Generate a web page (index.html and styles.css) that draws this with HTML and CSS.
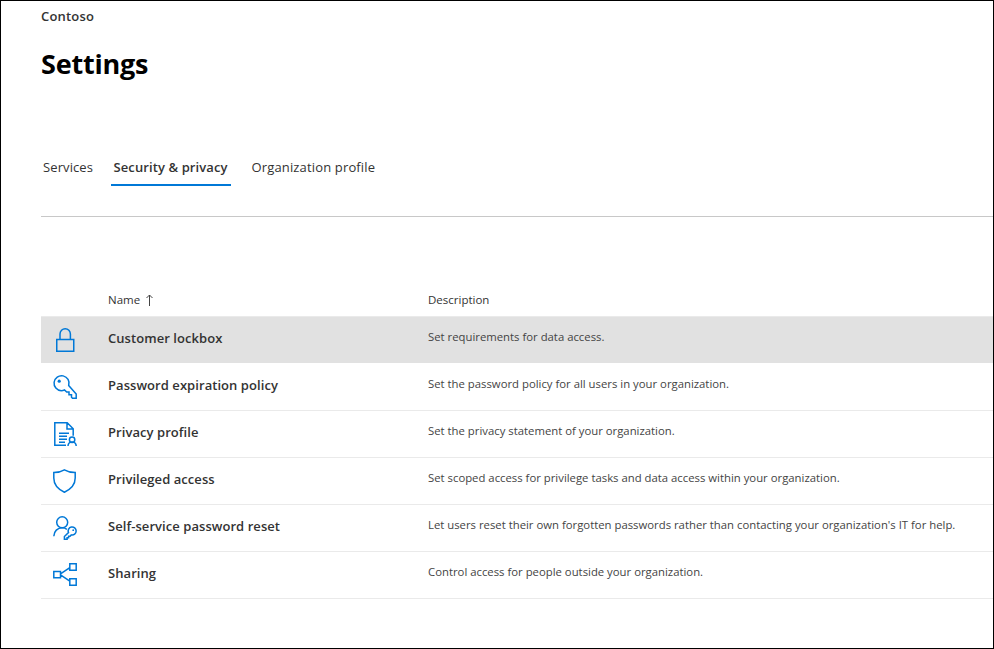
FILE: index.html
```html
<!DOCTYPE html>
<html lang="en">
<head>
<meta charset="utf-8">
<title>Settings</title>
<link rel="stylesheet" href="styles.css">
</head>
<body>
<main class="page">
  <div class="tenant"><span>Contoso</span></div>
  <h1 class="title"><span>Settings</span></h1>
  <nav class="tabs">
    <a class="tab tab-services"><span>Services</span></a>
    <a class="tab tab-active"><span>Security &amp; privacy</span></a>
    <a class="tab tab-profile"><span>Organization profile</span></a>
  </nav>
  <section class="list">
    <div class="list-head">
      <span class="name-head">Name
        <svg class="sort" viewBox="0 0 8 12"><path d="M3.5 12V1M.5 4l3-3 3 3"/></svg>
      </span>
      <span class="desc-head">Description</span>
    </div>
    <div class="row row-selected">
      <svg class="icon" viewBox="0 0 24 24"><path d="M3.75 11.5h17v11.7h-17zM7 11.5V6a5.2 5.2 0 0 1 10.4 0v5.5"/></svg>
      <span class="name">Customer lockbox</span>
      <span class="desc">Set requirements for data access.</span>
    </div>
    <div class="row">
      <svg class="icon" viewBox="0 0 24 24"><path d="M15.7 10.5A7.5 7.5 0 1 0 8.3 15.7c1.3 0 2.3-.3 3.2-.8l2.2 2.2h2.3v2.7h2.5v2.5l1 1h3.7v-4.2z"/><circle class="dot" cx="6.2" cy="6.2" r="1.6"/></svg>
      <span class="name">Password expiration policy</span>
      <span class="desc">Set the password policy for all users in your organization.</span>
    </div>
    <div class="row">
      <svg class="icon" viewBox="0 0 24 24"><path d="M13 23.2H1.8V.8h12.4l6 6v7M14 .8V7h6.2M6 11.2h10M6 14.3h8M6 17.3h8M6 20.3h6"/><circle cx="19.1" cy="17.7" r="2.7"/><path d="M15 24a4.1 4.1 0 0 1 8.2 0"/></svg>
      <span class="name">Privacy profile</span>
      <span class="desc">Set the privacy statement of your organization.</span>
    </div>
    <div class="row">
      <svg class="icon" viewBox="0 0 24 24"><path d="M11.4.8C8.2 2.7 4.7 3.6.8 3.6V9c0 7 4.2 11.2 10.6 14.2C17.8 20.2 22.2 16 22.2 9V3.6C18.2 3.6 14.7 2.7 11.4.8z"/></svg>
      <span class="name">Privileged access</span>
      <span class="desc">Set scoped access for privilege tasks and data access within your organization.</span>
    </div>
    <div class="row">
      <svg class="icon" viewBox="0 0 24 24"><circle cx="9.2" cy="6.3" r="5.5"/><path d="M.8 20.2c.2-5 3.7-8.4 8.4-8.4 1.8 0 3.4.5 4.7 1.5M15.5 16.6a4 4 0 1 1 2.8 2.3l-1.2 1.3h-1.5v1.6h-1.5v1.5h-2.7v-2.8z"/><circle class="dot" cx="20.2" cy="14.2" r=".9"/></svg>
      <span class="name">Self-service password reset</span>
      <span class="desc">Let users reset their own forgotten passwords rather than contacting your organization's IT for help.</span>
    </div>
    <div class="row">
      <svg class="icon" viewBox="0 0 24 24"><path d="M.8 8.6h6.7v6.2H.8zM16.8.8h6.4v6.4h-6.4zM16.8 15.8h6.4v6.4h-6.4zM7.5 10.9l9.3-6.2M7.5 11.9l9.3 6.3"/></svg>
      <span class="name">Sharing</span>
      <span class="desc">Control access for people outside your organization.</span>
    </div>
  </section>
</main>
</body>
</html>
```

FILE: styles.css
```css
* { box-sizing: border-box; }
body {
  margin: 0;
  background: #fff;
  color: #333;
  font-family: "Open Sans", "Noto Sans", sans-serif;
}
.page {
  width: 994px;
  height: 649px;
  border: 1px solid #000;
  padding-left: 40px;
  overflow: hidden;
}
.tenant {
  height: 30px;
  line-height: 30px;
  font-size: 13px;
  font-weight: 600;
  letter-spacing: 0.2px;
}
.title {
  margin: 13px 0 0;
  height: 40px;
  line-height: 40px;
  font-size: 27px;
  font-weight: 700;
  letter-spacing: -0.2px;
  color: #000;
}
.tabs {
  display: flex;
  height: 133px;
  padding-top: 66px;
  border-bottom: 1px solid #c8c8c8;
}
.tab {
  height: 36px;
  line-height: 34px;
  font-size: 13px;
  letter-spacing: 0.1px;
  white-space: nowrap;
}
.tab-services { width: 70px; padding-left: 2px; }
.tab-active {
  width: 120px;
  padding-left: 2.5px;
  font-weight: 600;
  border-bottom: 2px solid #0078d7;
}
.tab-profile { padding-left: 20.5px; letter-spacing: 0.15px; }
.list-head {
  display: grid;
  grid-template-columns: 320px 1fr;
  height: 100px;
  padding: 73px 0 0 67px;
  border-bottom: 1px solid #eaeaea;
  line-height: 20px;
  font-size: 11.5px;
}
.name-head { display: flex; align-items: center; gap: 6px; height: 20px; }
.sort { width: 8px; height: 12px; fill: none; stroke: #444; stroke-width: 1; }
.row {
  display: grid;
  grid-template-columns: 55px 320px 1fr;
  height: 47px;
  padding: 11px 0 0 12px;
  border-bottom: 1px solid #eaeaea;
}
.row-selected { background: #e1e1e1; border-bottom-color: #fff; background-clip: padding-box; }
.icon {
  width: 24px;
  height: 24px;
  fill: none;
  stroke: #0078d7;
  stroke-width: 1.5;
  overflow: visible;
}
.dot { fill: #0078d7; stroke: none; }
.name { line-height: 20px; font-size: 13px; font-weight: 600; letter-spacing: 0.06px; white-space: nowrap; }
.desc { line-height: 18px; font-size: 11.33px; color: #444; white-space: nowrap; }
```
